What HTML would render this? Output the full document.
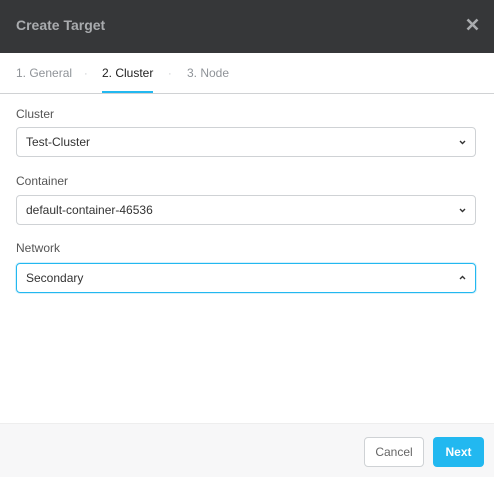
<!DOCTYPE html><html><head><style>
*{box-sizing:border-box;margin:0;padding:0}
body{width:494px;height:477px;background:#fff;font-family:"Liberation Sans",sans-serif;position:relative;overflow:hidden}
.hd{position:absolute;left:0;top:0;width:494px;height:53px;background:#363739}
.hd .t{position:absolute;left:16px;top:17px;color:#a9abae;font-weight:bold;font-size:14px}
.tabs{position:absolute;top:53px;left:0;width:494px;height:41px;border-bottom:1px solid #d0d2d4}
.tab{position:absolute;top:13px;font-size:12px;color:#8f9398}
.dot{position:absolute;top:15px;font-size:11px;color:#c8cacc}
.act{color:#222;}
.ul{position:absolute;left:102px;top:38px;width:51px;height:2px;background:#22b8f0}
.lbl{position:absolute;left:16px;font-size:12px;color:#555}
.sel{position:absolute;left:16px;width:460px;height:30px;border:1px solid #cfd2d5;border-radius:4px;font-size:12px;color:#333;padding:7px 9px}
.sel svg{position:absolute;right:9px;top:12px}
.foc{border-color:#22b8f0;box-shadow:0 0 0 1px #d6f0fb}
.ft{position:absolute;left:0;top:423px;width:494px;height:54px;background:#f7f7f8;border-top:1px solid #eee}
.b{position:absolute;top:13px;height:30px;border-radius:4px;font-size:12px;text-align:center;line-height:29px}
</style></head><body>
<div class="hd"><div class="t">Create Target</div>
<svg style="position:absolute;left:466px;top:18px" width="13" height="13" viewBox="0 0 13 13"><path d="M1.5 1.5L11.5 11.5M11.5 1.5L1.5 11.5" stroke="#a9abae" stroke-width="2.6"/></svg></div>
<div class="tabs">
<div class="tab" style="left:16px">1. General</div><div class="dot" style="left:84px">·</div>
<div class="tab act" style="left:102px">2. Cluster</div><div class="dot" style="left:168px">·</div>
<div class="tab" style="left:187px">3. Node</div>
<div class="ul"></div></div>
<div class="lbl" style="top:107px">Cluster</div>
<div class="sel" style="top:127px">Test-Cluster<svg width="7" height="5" viewBox="0 0 7 5"><path d="M1 1L3.5 3.5L6 1" stroke="#333" stroke-width="1.4" fill="none"/></svg></div>
<div class="lbl" style="top:174px">Container</div>
<div class="sel" style="top:195px">default-container-46536<svg width="7" height="5" viewBox="0 0 7 5"><path d="M1 1L3.5 3.5L6 1" stroke="#333" stroke-width="1.4" fill="none"/></svg></div>
<div class="lbl" style="top:241px">Network</div>
<div class="sel foc" style="top:263px">Secondary<svg width="7" height="5" viewBox="0 0 7 5" style="top:11px"><path d="M1 4L3.5 1.5L6 4" stroke="#333" stroke-width="1.4" fill="none"/></svg></div>
<div class="ft">
<div class="b" style="left:364px;width:60px;background:#fff;border:1px solid #cfd2d5;color:#666">Cancel</div>
<div class="b" style="left:433px;width:51px;background:#22b8f0;color:#fff;font-weight:bold;line-height:30px">Next</div>
</div>
</body></html>
